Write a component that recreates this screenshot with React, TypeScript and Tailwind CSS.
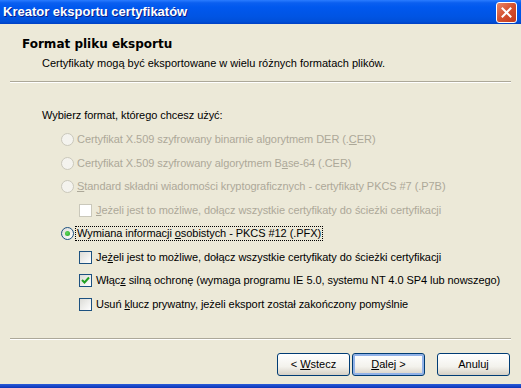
import React from 'react';

type Row =
  | { kind: 'radio'; checked?: boolean; disabled?: boolean; focus?: boolean; label: React.ReactNode }
  | { kind: 'check'; checked?: boolean; disabled?: boolean; label: React.ReactNode };

const rows: Row[] = [
  {
    kind: 'radio',
    disabled: true,
    label: (
      <>
        Certyfikat X.509 szyfrowany binarnie algorytmem DER (.<u>C</u>ER)
      </>
    ),
  },
  {
    kind: 'radio',
    disabled: true,
    label: (
      <>
        Certyfikat X.509 szyfrowany algorytmem B<u>a</u>se-64 (.CER)
      </>
    ),
  },
  {
    kind: 'radio',
    disabled: true,
    label: (
      <>
        <u>S</u>tandard składni wiadomości kryptograficznych - certyfikaty PKCS #7 (.P7B)
      </>
    ),
  },
  {
    kind: 'check',
    disabled: true,
    label: (
      <>
        <u>J</u>eżeli jest to możliwe, dołącz wszystkie certyfikaty do ścieżki certyfikacji
      </>
    ),
  },
  {
    kind: 'radio',
    checked: true,
    focus: true,
    label: (
      <>
        Wymiana informacji <u>o</u>sobistych - PKCS #12 (.PFX)
      </>
    ),
  },
  {
    kind: 'check',
    label: (
      <>
        Je<u>ż</u>eli jest to możliwe, dołącz wszystkie certyfikaty do ścieżki certyfikacji
      </>
    ),
  },
  {
    kind: 'check',
    checked: true,
    label: (
      <>
        Włąc<u>z</u> silną ochronę (wymaga programu IE 5.0, systemu NT 4.0 SP4 lub nowszego)
      </>
    ),
  },
  {
    kind: 'check',
    label: (
      <>
        Usuń <u>k</u>lucz prywatny, jeżeli eksport został zakończony pomyślnie
      </>
    ),
  },
];

function Radio({ checked, disabled }: { checked?: boolean; disabled?: boolean }) {
  return (
    <span
      className={
        disabled
          ? 'w-[13px] h-[13px] rounded-full border border-[#CAC8BB] bg-[#F4F3EE] flex items-center justify-center shrink-0'
          : 'w-[13px] h-[13px] rounded-full border border-[#1C5180] bg-[linear-gradient(135deg,#DCDCD7,#FFFFFF)] flex items-center justify-center shrink-0'
      }
    >
      {checked && (
        <span className="w-[5px] h-[5px] rounded-full bg-[radial-gradient(circle_at_40%_40%,#60D95C,#21A121)]" />
      )}
    </span>
  );
}

function Check({ checked, disabled }: { checked?: boolean; disabled?: boolean }) {
  return (
    <span
      className={
        disabled
          ? 'w-[13px] h-[13px] border border-[#CAC8BB] bg-white flex items-center justify-center shrink-0'
          : 'w-[13px] h-[13px] border border-[#1C5180] bg-[linear-gradient(135deg,#DCDCD7,#FFFFFF)] flex items-center justify-center shrink-0'
      }
    >
      {checked && (
        <svg width="9" height="9" viewBox="0 0 9 9">
          <path d="M1 4 L3.5 6.5 L8 1.5" stroke="#21A121" strokeWidth="2" fill="none" />
        </svg>
      )}
    </span>
  );
}

function XpButton({ children, isDefault }: { children: React.ReactNode; isDefault?: boolean }) {
  return (
    <button
      className={
        'w-[73px] h-[23px] rounded-[3px] border border-[#003C74] bg-[linear-gradient(to_bottom,#FFFFFF,#F3F2EC_60%,#D6D0C5)] text-black text-[11px] flex items-center justify-center ' +
        (isDefault ? 'shadow-[inset_0_0_0_2px_#91B2E8]' : '')
      }
    >
      {children}
    </button>
  );
}

export default function App() {
  return (
    <div
      className="w-[521px] h-[388px] bg-[#ECE9D8] flex flex-col overflow-hidden text-black"
      style={{ fontFamily: '"Liberation Sans", Arial, sans-serif' }}
    >
      {/* title bar */}
      <div className="h-[24px] shrink-0 flex items-center justify-between pl-[3px] pr-[4px] bg-[linear-gradient(to_bottom,#2A7CFF_0%,#0A5FF0_12%,#0058EE_30%,#0054E3_70%,#004FD8_90%,#0040C4_100%)]">
        <span className="text-white font-bold text-[13px] [text-shadow:1px_1px_0_#0A1E8A]">
          Kreator eksportu certyfikatów
        </span>
        <span className="w-[21px] h-[21px] rounded-[3px] border border-white bg-[linear-gradient(135deg,#E8866A,#D4502E_50%,#C2391B)] flex items-center justify-center">
          <svg width="11" height="11" viewBox="0 0 11 11">
            <path d="M1.5 1.5 L9.5 9.5 M9.5 1.5 L1.5 9.5" stroke="white" strokeWidth="2" strokeLinecap="square" />
          </svg>
        </span>
      </div>

      {/* header */}
      <div className="pt-[13px] pl-[22px]">
        <div className="h-[14px] leading-[14px] font-bold text-[12px]" style={{ fontFamily: '"DejaVu Sans", sans-serif' }}>
          Format pliku eksportu
        </div>
        <div className="mt-[5px] pl-[20px] h-[14px] leading-[14px] text-[11px]">
          Certyfikaty mogą być eksportowane w wielu różnych formatach plików.
        </div>
      </div>
      <div className="mt-[11px] mx-[10px] border-t border-t-[#ACA899] border-b border-b-white" />

      {/* body */}
      <div className="flex-1 pl-[42px] pt-[25px] text-[11px] tracking-[-0.06px]">
        <div className="h-[14px] leading-[14px]">Wybierz format, którego chcesz użyć:</div>
        <div className="mt-[6px] flex flex-col">
          {rows.map((r, i) => (
            <div
              key={i}
              className={
                'h-[23.5px] flex items-center ' + (r.kind === 'radio' ? 'pl-[19px] gap-[1px]' : 'pl-[37px] gap-[2px]')
              }
            >
              {r.kind === 'radio' ? (
                <Radio checked={r.checked} disabled={r.disabled} />
              ) : (
                <Check checked={r.checked} disabled={r.disabled} />
              )}
              <span
                className={
                  'px-[1px] leading-[13px] whitespace-nowrap border ' +
                  (r.kind === 'radio' && r.focus ? 'border-dotted border-black' : 'border-transparent') +
                  (r.disabled ? ' text-[#ACA899]' : '')
                }
              >
                {r.label}
              </span>
            </div>
          ))}
        </div>
      </div>

      <div className="shrink-0 mx-[10px] border-t border-t-[#ACA899] border-b border-b-white" />

      {/* buttons */}
      <div className="shrink-0 mt-[13px] h-[23px] flex justify-end pr-[11px]">
        <div className="flex gap-[2px]">
          <XpButton>
            &lt; <u className="ml-[3px]">W</u>stecz
          </XpButton>
          <XpButton isDefault>
            <u>D</u>alej &gt;
          </XpButton>
        </div>
        <div className="ml-[12px]">
          <XpButton>Anuluj</XpButton>
        </div>
      </div>

      <div className="shrink-0 mt-[8px] h-[4px] bg-[linear-gradient(to_bottom,#2A5CD8,#0A33B8)]" />
    </div>
  );
}
